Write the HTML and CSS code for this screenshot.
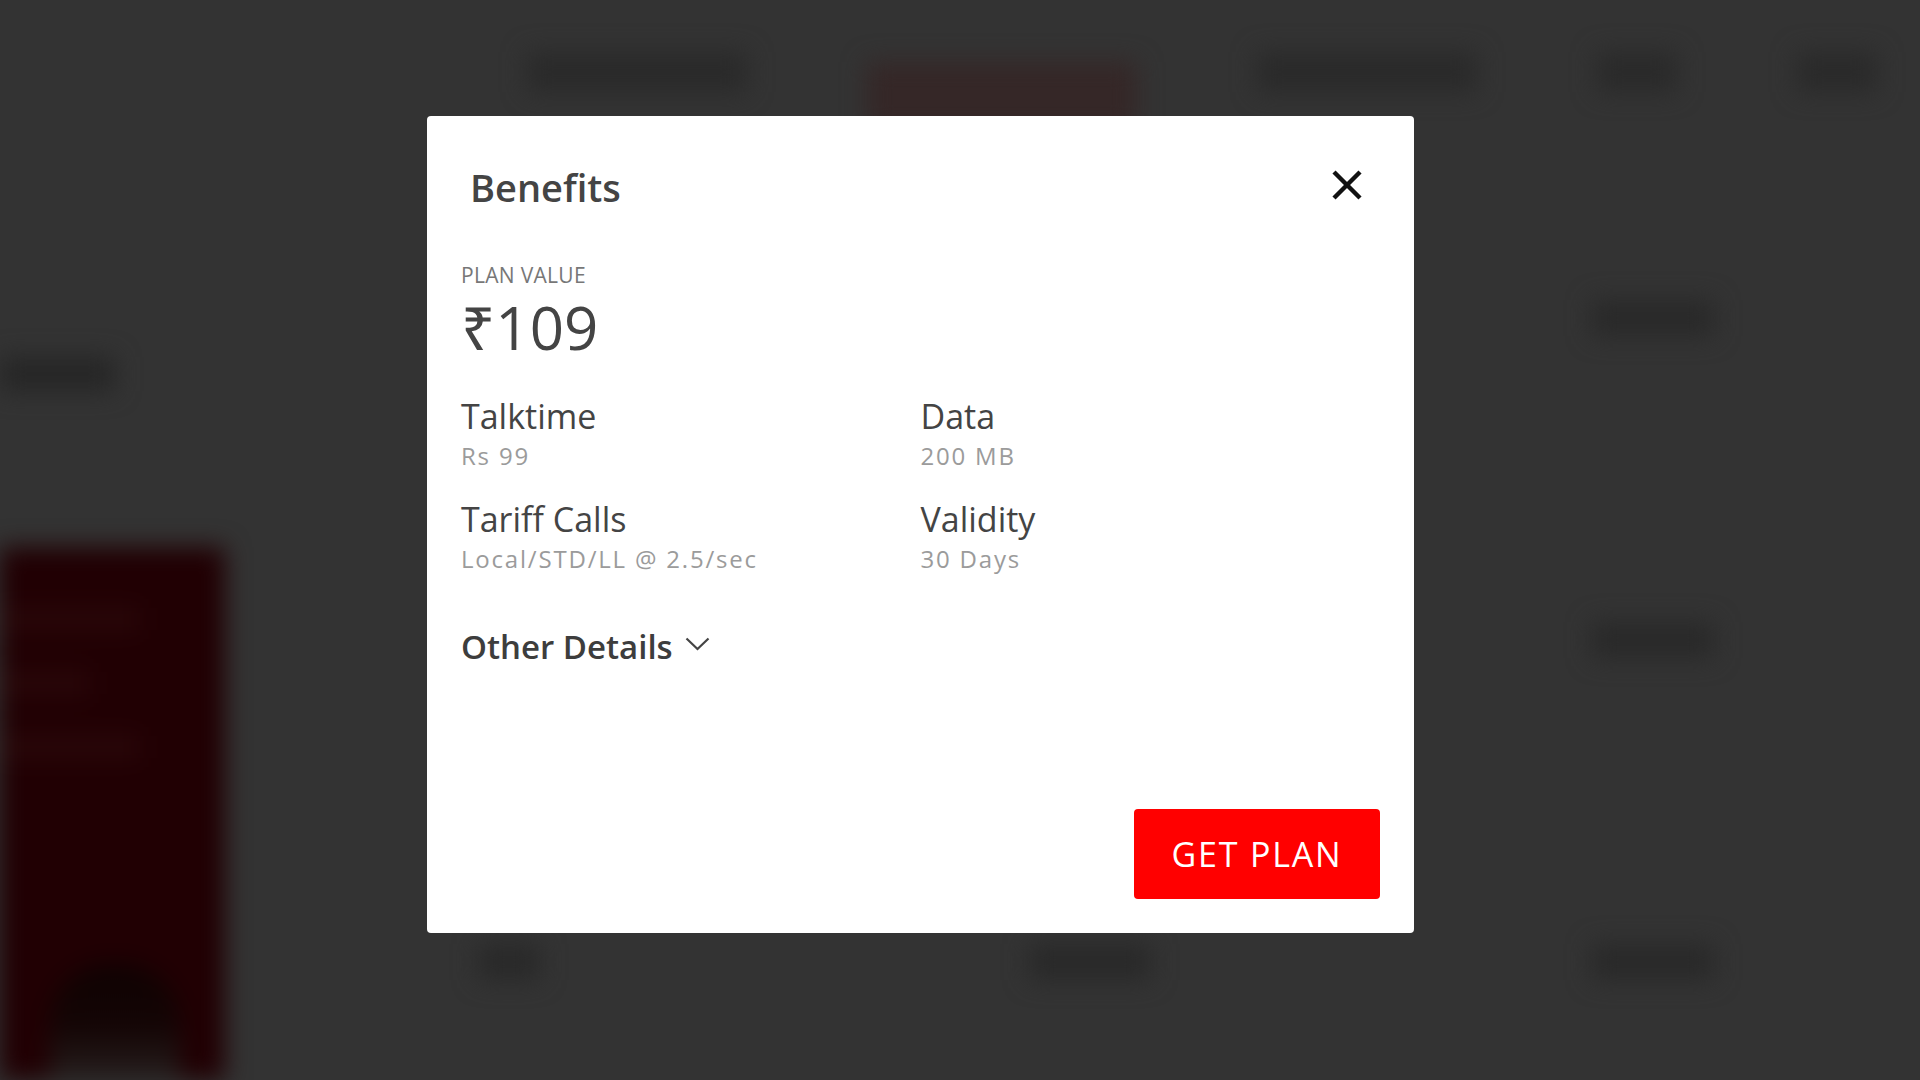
FILE: index.html
```html
<!DOCTYPE html>
<html>
<head>
    <title>Recharge Plans</title>
    <link rel="stylesheet" href="styles.css">
</head>
<body>
    <!-- Page behind the dialog (blurred) -->
    <div class="backdrop">
        <div class="nav">
            <span class="nav-item nav-wide"></span>
            <span class="nav-item nav-active"></span>
            <span class="nav-item nav-wide"></span>
            <span class="nav-item nav-small"></span>
            <span class="nav-item nav-small"></span>
        </div>
        <div class="page-body">
            <div class="side">
                <div class="side-title"></div>
                <div class="promo">
                    <span class="promo-line"></span>
                    <span class="promo-line short"></span>
                    <span class="promo-line"></span>
                    <span class="promo-art"></span>
                </div>
            </div>
            <div class="plans">
                <div class="plan-cell"><span class="pill"></span></div>
                <div class="plan-cell"><span class="pill"></span></div>
                <div class="plan-cell"><span class="pill"></span></div>
                <div class="plan-cell"><span class="pill"></span></div>
                <div class="plan-cell"><span class="pill"></span></div>
                <div class="plan-cell"><span class="pill"></span></div>
                <div class="plan-cell"><span class="pill small"></span></div>
                <div class="plan-cell"><span class="pill"></span></div>
                <div class="plan-cell"><span class="pill"></span></div>
            </div>
        </div>
    </div>

    <!-- Benefits dialog -->
    <div class="overlay">
        <div class="modal">
            <div class="modal-header">
                <h2 class="modal-title">Benefits</h2>
                <svg class="close-icon" width="32" height="30" viewBox="0 0 32 30">
                    <line x1="3" y1="2" x2="29" y2="28" stroke="#111" stroke-width="4.4"/>
                    <line x1="29" y1="2" x2="3" y2="28" stroke="#111" stroke-width="4.4"/>
                </svg>
            </div>

            <div class="plan-label">PLAN VALUE</div>
            <div class="plan-price">₹109</div>

            <div class="benefit-grid">
                <div class="benefit">
                    <div class="benefit-name">Talktime</div>
                    <div class="benefit-value">Rs 99</div>
                </div>
                <div class="benefit">
                    <div class="benefit-name">Data</div>
                    <div class="benefit-value">200 MB</div>
                </div>
                <div class="benefit">
                    <div class="benefit-name">Tariff Calls</div>
                    <div class="benefit-value">Local/STD/LL @ 2.5/sec</div>
                </div>
                <div class="benefit">
                    <div class="benefit-name">Validity</div>
                    <div class="benefit-value">30 Days</div>
                </div>
            </div>

            <div class="other-details">
                <span>Other Details</span>
                <svg width="25" height="14" viewBox="0 0 25 14">
                    <polyline points="1.5,1.5 12.5,12 23.5,1.5" fill="none" stroke="#444" stroke-width="2.2"/>
                </svg>
            </div>

            <button class="get-plan">GET PLAN</button>
        </div>
    </div>
</body>
</html>
```

FILE: styles.css
```css
/* Base */
html, body {
    margin: 0;
    height: 100%;
    overflow: hidden;
}

body {
    background-color: #333333;
    font-family: "Open Sans", "Noto Sans", "DejaVu Sans", sans-serif;
}

/* Blurred page behind the dialog */
.backdrop {
    filter: blur(12px);
    height: 100%;
    overflow: hidden;
}

.nav {
    display: flex;
    align-items: flex-start;
    padding: 52px 0 0 527px;
    gap: 120px;
    height: 70px;
}

.nav-item {
    display: block;
    height: 40px;
    background-color: #2a2a2a;
}

.nav-wide {
    width: 220px;
}

.nav-active {
    width: 270px;
    height: 70px;
    margin-top: 10px;
    background-color: #352727;
}

.nav-small {
    width: 80px;
}

.page-body {
    display: flex;
}

.side {
    width: 225px;
    flex-shrink: 0;
}

.side-title {
    width: 115px;
    height: 34px;
    margin-top: 235px;
    background-color: #262626;
}

.promo {
    margin-top: 156px;
    height: 540px;
    background-color: #210003;
    display: flex;
    flex-direction: column;
    gap: 40px;
    padding: 60px 30px 0 0;
}

.promo-line {
    display: block;
    height: 24px;
    width: 140px;
    background-color: #290709;
}

.promo-line.short {
    width: 90px;
}

.promo-art {
    display: block;
    width: 130px;
    height: 140px;
    margin: 165px 0 0 50px;
    border-radius: 60px 60px 0 0;
    background: linear-gradient(#0e0202 0%, #140505 45%, #2f2b2a 100%);
}

.plans {
    flex: 1;
    display: grid;
    grid-template-columns: 560px 560px 1fr;
    grid-auto-rows: 322px;
    padding-top: 178px;
}

.plan-cell {
    display: flex;
    justify-content: flex-start;
}

.plan-cell:nth-child(3n+1) {
    padding-left: 253px;
}

.plan-cell:nth-child(3n+2) {
    padding-left: 244px;
}

.plan-cell:nth-child(3n) {
    padding-left: 247px;
}

.pill {
    display: block;
    width: 122px;
    height: 36px;
    background-color: #292929;
}

.pill.small {
    width: 62px;
}

/* Dialog */
.overlay {
    position: fixed;
    inset: 0;
    display: flex;
    align-items: flex-start;
    padding: 116px 0 0 427px;
}

.modal {
    box-sizing: border-box;
    width: 987px;
    height: 817px;
    background-color: #ffffff;
    border-radius: 4px;
    padding: 34px;
    display: flex;
    flex-direction: column;
}

.modal-header {
    display: flex;
    justify-content: space-between;
    align-items: center;
    padding: 15px 17px 0 9px;
}

.modal-title {
    margin: 0;
    font-size: 38px;
    line-height: 44px;
    font-weight: 600;
    color: #444444;
}

.close-icon {
    display: block;
    margin-top: -4px;
}

.plan-label {
    margin-top: 54px;
    font-size: 21px;
    line-height: 25px;
    letter-spacing: 0.3px;
    color: #777777;
}

.plan-price {
    margin-top: 3px;
    font-size: 60px;
    line-height: 72px;
    color: #444444;
}

.benefit-grid {
    margin-top: 33px;
    display: grid;
    grid-template-columns: 1fr 1fr;
    row-gap: 29px;
}

.benefit-name {
    font-size: 34px;
    line-height: 40px;
    font-weight: 500;
    color: #444444;
}

.benefit-value {
    margin-top: 5px;
    font-size: 24px;
    line-height: 29px;
    letter-spacing: 1.8px;
    color: #9b9b9b;
}

.other-details {
    margin-top: 54px;
    display: flex;
    align-items: center;
    gap: 12px;
    font-size: 33px;
    line-height: 40px;
    font-weight: 600;
    color: #3d3d3d;
}

.other-details svg {
    display: block;
    margin-top: -6px;
}

.get-plan {
    margin-top: auto;
    align-self: flex-end;
    width: 246px;
    height: 90px;
    border: none;
    border-radius: 4px;
    background-color: #ff0000;
    color: #ffffff;
    font-family: inherit;
    font-size: 34px;
    font-weight: 500;
    letter-spacing: 1.8px;
    cursor: pointer;
}
```
